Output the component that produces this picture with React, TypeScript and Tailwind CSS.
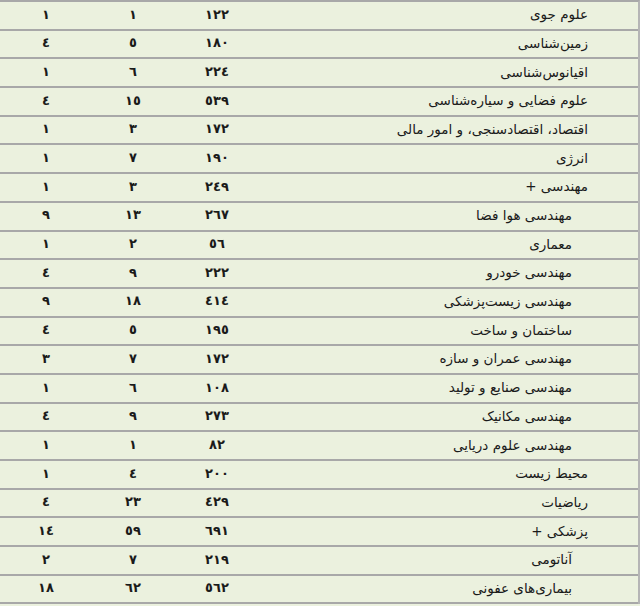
import React from "react";

type Row = { a: string; b: string; c: string; t: string; sub?: boolean };

const rows: Row[] = [
  { a: "١", b: "١", c: "١٢٢", t: "علوم جوی" },
  { a: "٤", b: "٥", c: "١٨٠", t: "زمین‌شناسی" },
  { a: "١", b: "٦", c: "٢٢٤", t: "اقیانوس‌شناسی" },
  { a: "٤", b: "١٥", c: "٥٣٩", t: "علوم فضایی و سیاره‌شناسی" },
  { a: "١", b: "٣", c: "١٧٢", t: "اقتصاد، اقتصادسنجی، و امور مالی" },
  { a: "١", b: "٧", c: "١٩٠", t: "انرژی" },
  { a: "١", b: "٣", c: "٢٤٩", t: "مهندسی +" },
  { a: "٩", b: "١٣", c: "٢٦٧", t: "مهندسی هوا فضا", sub: true },
  { a: "١", b: "٢", c: "٥٦", t: "معماری", sub: true },
  { a: "٤", b: "٩", c: "٢٢٢", t: "مهندسی خودرو", sub: true },
  { a: "٩", b: "١٨", c: "٤١٤", t: "مهندسی زیست‌پزشکی", sub: true },
  { a: "٤", b: "٥", c: "١٩٥", t: "ساختمان و ساخت", sub: true },
  { a: "٣", b: "٧", c: "١٧٢", t: "مهندسی عمران و سازه", sub: true },
  { a: "١", b: "٦", c: "١٠٨", t: "مهندسی صنایع و تولید", sub: true },
  { a: "٤", b: "٩", c: "٢٧٣", t: "مهندسی مکانیک", sub: true },
  { a: "١", b: "١", c: "٨٢", t: "مهندسی علوم دریایی", sub: true },
  { a: "١", b: "٤", c: "٢٠٠", t: "محیط زیست" },
  { a: "٤", b: "٢٣", c: "٤٢٩", t: "ریاضیات" },
  { a: "١٤", b: "٥٩", c: "٦٩١", t: "پزشکی +" },
  { a: "٢", b: "٧", c: "٢١٩", t: "آناتومی", sub: true },
  { a: "١٨", b: "٦٢", c: "٥٦٢", t: "بیماری‌های عفونی", sub: true },
];

export default function App() {
  return (
    <div
      className="w-[640px] h-[606px] bg-[#ebf1de] text-[#1a1a1a] overflow-hidden"
      style={{ fontFamily: '"DejaVu Sans", sans-serif' }}
    >
      <div className="border-t-2 border-t-[#a8a8a8] border-r-2 border-r-[#b5b5b5]">
        {rows.map((r, i) => (
          <div
            key={i}
            className="flex items-center h-[28.7px] pb-[2px] border-b-2 border-b-[#a8a8a8]"
          >
            <div className="w-[92px] text-center text-[13px] font-bold">{r.a}</div>
            <div className="w-[82px] text-center text-[13px] font-bold">{r.b}</div>
            <div className="w-[86px] text-center text-[13px] font-bold">{r.c}</div>
            <div
              dir="rtl"
              className={
                "flex-1 text-right text-[13.5px] " +
                (r.sub ? "pr-[66px]" : "pr-[50px]")
              }
            >
              {r.t}
            </div>
          </div>
        ))}
      </div>
    </div>
  );
}
